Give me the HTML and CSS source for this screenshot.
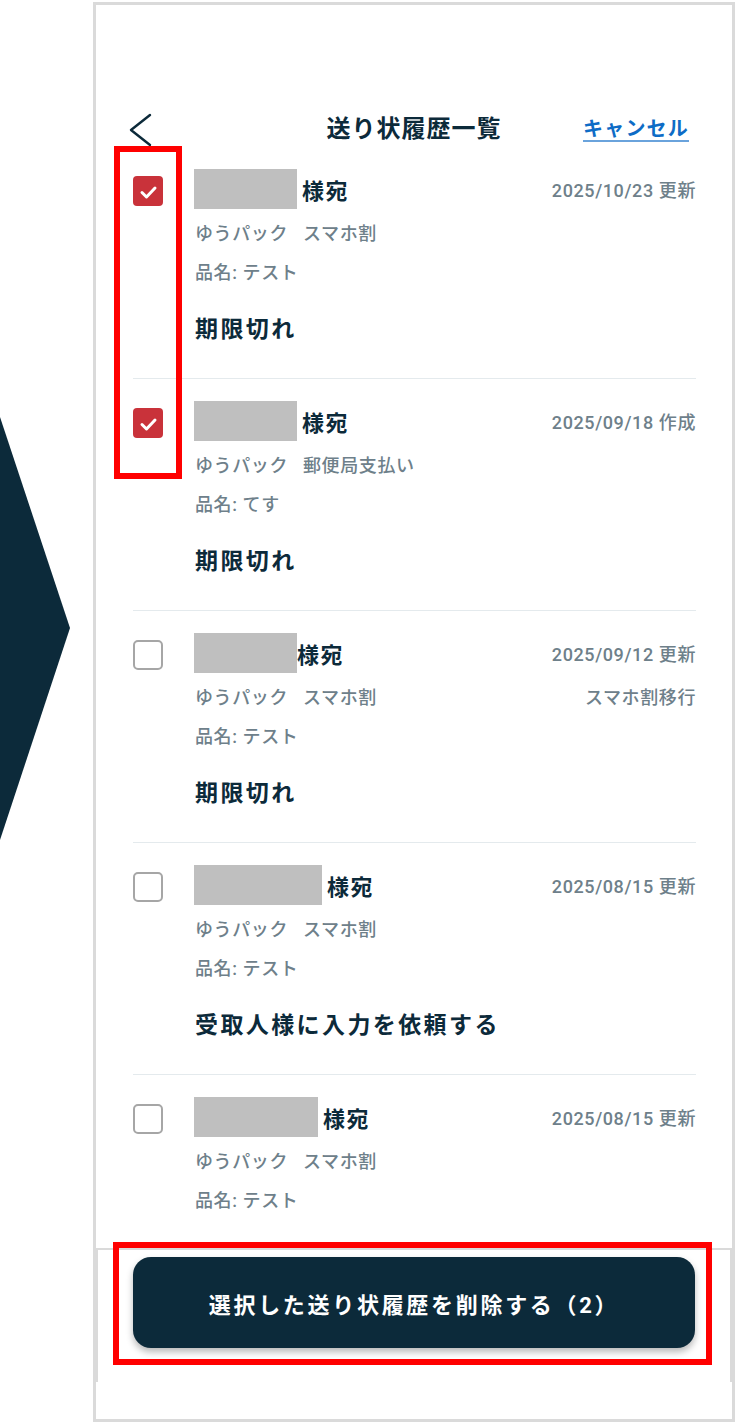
FILE: index.html
```html
<!DOCTYPE html>
<html lang="ja">
<head>
<meta charset="utf-8">
<meta name="viewport" content="width=device-width, initial-scale=1">
<link rel="stylesheet" href="styles.css">
</head>
<body>
	<div class="page">
		<div class="side">
			<svg class="arrowShape" width="70" height="423" viewBox="0 0 70 423"><polygon points="0,0 70,211 0,423" fill="#0c2a3a"/></svg>
		</div>

		<div class="phone">
			<div class="header">
				<svg class="back" width="24" height="34" viewBox="0 0 24 34"><path d="M22 2 L3 17 L22 32" fill="none" stroke="#0c2a3a" stroke-width="2.4" stroke-linecap="round" stroke-linejoin="round"/></svg>
				<div class="title">送り状履歴一覧</div>
				<a class="cancel" href="#">キャンセル</a>
			</div>

			<div class="list">
				<div class="item">
					<span class="check checked"><svg width="30" height="30" viewBox="0 0 30 30"><path d="M9 16.5 L13.5 21 L22 12" fill="none" stroke="#fff" stroke-width="3" stroke-linecap="round" stroke-linejoin="round"/></svg></span>
					<div class="info">
						<div class="top">
							<div class="name"><span class="redact" style="width:103px"></span><span class="after">様宛</span></div>
							<div class="date">2025/10/23 更新</div>
						</div>
						<div class="sub"><span><span class="kind">ゆうパック</span>スマホ割</span></div>
						<div class="sub small">品名: テスト</div>
						<div class="status">期限切れ</div>
					</div>
				</div>

				<div class="item">
					<span class="check checked"><svg width="30" height="30" viewBox="0 0 30 30"><path d="M9 16.5 L13.5 21 L22 12" fill="none" stroke="#fff" stroke-width="3" stroke-linecap="round" stroke-linejoin="round"/></svg></span>
					<div class="info">
						<div class="top">
							<div class="name"><span class="redact" style="width:103px"></span><span class="after">様宛</span></div>
							<div class="date">2025/09/18 作成</div>
						</div>
						<div class="sub"><span><span class="kind">ゆうパック</span>郵便局支払い</span></div>
						<div class="sub small">品名: てす</div>
						<div class="status">期限切れ</div>
					</div>
				</div>

				<div class="item">
					<span class="check"></span>
					<div class="info">
						<div class="top">
							<div class="name"><span class="redact" style="width:103px"></span>様宛</div>
							<div class="date">2025/09/12 更新</div>
						</div>
						<div class="sub"><span><span class="kind">ゆうパック</span>スマホ割</span><span>スマホ割移行</span></div>
						<div class="sub small">品名: テスト</div>
						<div class="status">期限切れ</div>
					</div>
				</div>

				<div class="item">
					<span class="check"></span>
					<div class="info">
						<div class="top">
							<div class="name"><span class="redact" style="width:128px"></span><span class="after">様宛</span></div>
							<div class="date">2025/08/15 更新</div>
						</div>
						<div class="sub"><span><span class="kind">ゆうパック</span>スマホ割</span></div>
						<div class="sub small">品名: テスト</div>
						<div class="status">受取人様に入力を依頼する</div>
					</div>
				</div>

				<div class="item">
					<span class="check"></span>
					<div class="info">
						<div class="top">
							<div class="name"><span class="redact" style="width:124px"></span><span class="after">様宛</span></div>
							<div class="date">2025/08/15 更新</div>
						</div>
						<div class="sub"><span><span class="kind">ゆうパック</span>スマホ割</span></div>
						<div class="sub small">品名: テスト</div>
					</div>
				</div>
			</div>

			<div class="bottomBar">
				<button class="deleteBtn">選択した送り状履歴を削除する（2）</button>
			</div>
		</div>

		<!-- annotation boxes -->
		<div class="mark markChecks"></div>
		<div class="mark markButton"></div>
	</div>
</body>
</html>
```

FILE: styles.css
```css
:root {
	--navy:#0c2a3a;
	--grey-text:#6e808a;
	--frame:#dadada;
	--line:#e4eaed;
	--red:#c9323a;
	--blue:#0e6cc6;
}

* {
	box-sizing:border-box;
}

html, body {
	margin:0;
	background:#fff;
	font-family:Roboto, "Noto Sans CJK JP", sans-serif;
	color:var(--navy);
}

.page{
	position:relative;
	display:flex;
	width:737px;
	height:1424px;
}

.side{
	width:93px;
	flex:none;
}
.arrowShape{
	display:block;
	margin-top:417px;
}

.phone{
	width:642px;
	height:1420px;
	margin-top:2px;
	border:3px solid var(--frame);
	display:flex;
	flex-direction:column;
	padding-bottom:37px;
}

.header{
	height:142px;
	flex:none;
	padding:102px 32px 0;
	display:grid;
	grid-template-columns:1fr auto 1fr;
	align-items:center;
}
.header > *{
	height:40px;
}
.back{
	display:block;
	margin-top:3px;
}
.title{
	font-size:24px;
	font-weight:bold;
	letter-spacing:1px;
	line-height:40px;
}
.cancel{
	justify-self:end;
	margin-right:11px;
	font-size:20px;
	font-weight:bold;
	letter-spacing:1.2px;
	line-height:40px;
	color:var(--blue);
	text-decoration:underline;
	text-decoration-color:#6aa3dc;
	text-underline-offset:4px;
}

.list{
	flex:1;
	overflow:hidden;
	padding:0 36px 0 37px;
}

.item{
	display:flex;
	gap:32px;
	padding:22px 0 33px;
	border-bottom:1px solid var(--line);
}

.check{
	flex:none;
	width:30px;
	height:30px;
	margin-top:7px;
	border:2px solid #a6a6a6;
	border-radius:5px;
}
.check.checked{
	background:var(--red);
	border:none;
	border-radius:4px;
}
.check svg{
	display:block;
}

.info{
	flex:1;
}

.top{
	display:flex;
	justify-content:space-between;
	align-items:center;
	height:40px;
	margin-left:-1px;
}
.name{
	display:flex;
	align-items:center;
	font-size:22px;
	font-weight:bold;
	letter-spacing:1.5px;
}
.redact{
	display:inline-block;
	height:40px;
	background:#bfbfbf;
}
.name .after{
	margin-left:5px;
}
.date{
	font-size:18px;
	font-weight:500;
	letter-spacing:0.6px;
	color:var(--grey-text);
}

.sub{
	display:flex;
	justify-content:space-between;
	margin-top:12px;
	line-height:26px;
	font-size:18px;
	font-weight:500;
	letter-spacing:0.6px;
	color:var(--grey-text);
}
.sub.small{
	margin-top:13px;
}
.kind{
	margin-right:15px;
}

.status{
	margin-top:29px;
	line-height:30px;
	font-size:23px;
	font-weight:bold;
	letter-spacing:2.4px;
}

.bottomBar{
	flex:none;
	height:134px;
	background:#fff;
	border:2px solid var(--frame);
	border-bottom:none;
	padding:7px 35px 0;
}
.deleteBtn{
	display:block;
	width:100%;
	height:91px;
	border:none;
	border-radius:18px;
	background:var(--navy);
	color:#fff;
	font-family:Roboto, "Noto Sans CJK JP", sans-serif;
	font-size:22px;
	font-weight:bold;
	letter-spacing:2.7px;
	box-shadow:0 4px 7px rgba(0,0,0,0.28);
}

.mark{
	position:absolute;
	border:6px solid #ff0000;
}
.markChecks{
	left:114px;
	top:146px;
	width:68px;
	height:333px;
}
.markButton{
	left:113px;
	top:1242px;
	width:599px;
	height:123px;
}
```
